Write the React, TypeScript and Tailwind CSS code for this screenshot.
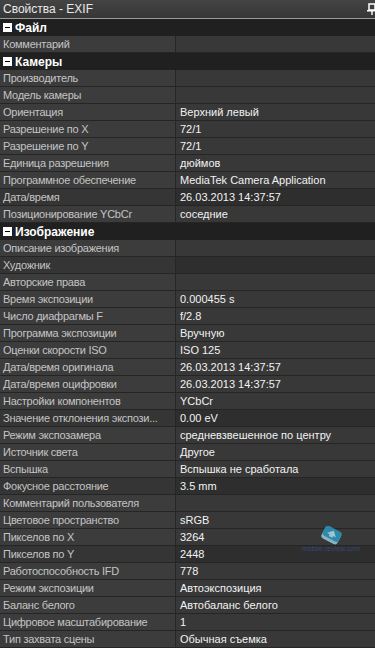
import React from "react";

type Item = { h: string } | { l: string; v?: string; dark?: boolean };

const items: Item[] = [
  { h: "Файл" },
  { l: "Комментарий" },
  { h: "Камеры" },
  { l: "Производитель" },
  { l: "Модель камеры" },
  { l: "Ориентация", v: "Верхний левый" },
  { l: "Разрешение по X", v: "72/1" },
  { l: "Разрешение по Y", v: "72/1" },
  { l: "Единица разрешения", v: "дюймов" },
  { l: "Программное обеспечение", v: "MediaTek Camera Application" },
  { l: "Дата/время", v: "26.03.2013 14:37:57", dark: true },
  { l: "Позиционирование YCbCr", v: "соседние" },
  { h: "Изображение" },
  { l: "Описание изображения" },
  { l: "Художник", dark: true },
  { l: "Авторские права" },
  { l: "Время экспозиции", v: "0.000455 s" },
  { l: "Число диафрагмы F", v: "f/2.8" },
  { l: "Программа экспозиции", v: "Вручную" },
  { l: "Оценки скорости ISO", v: "ISO 125" },
  { l: "Дата/время оригинала", v: "26.03.2013 14:37:57" },
  { l: "Дата/время оцифровки", v: "26.03.2013 14:37:57" },
  { l: "Настройки компонентов", v: "YCbCr" },
  { l: "Значение отклонения экспози...", v: "0.00 eV", dark: true },
  { l: "Режим экспозамера", v: "средневзвешенное по центру" },
  { l: "Источник света", v: "Другое" },
  { l: "Вспышка", v: "Вспышка не сработала" },
  { l: "Фокусное расстояние", v: "3.5 mm", dark: true },
  { l: "Комментарий пользователя" },
  { l: "Цветовое пространство", v: "sRGB" },
  { l: "Пикселов по X", v: "3264" },
  { l: "Пикселов по Y", v: "2448", dark: true },
  { l: "Работоспособность IFD", v: "778" },
  { l: "Режим экспозиции", v: "Автоэкспозиция" },
  { l: "Баланс белого", v: "Автобаланс белого" },
  { l: "Цифровое масштабирование", v: "1" },
  { l: "Тип захвата сцены", v: "Обычная съемка" },
];

function Minus() {
  return (
    <span className="w-[9px] h-[9px] bg-white flex items-center justify-center mr-[3px] shrink-0">
      <span className="w-[5px] h-[1px] bg-black" />
    </span>
  );
}

export default function App() {
  return (
    <div
      className="w-[375px] h-[648px] overflow-hidden bg-[#222] relative"
      style={{ fontFamily: '"Liberation Sans", Arial, sans-serif' }}
    >
      <div className="h-[18px] bg-gradient-to-b from-[#444] to-[#363636] flex items-center justify-between pl-[3px] border-b border-[#9a9a9a] box-content">
        <span className="text-[12px] text-[#e8e8e8] leading-none">Свойства - EXIF</span>
        <svg width="12" height="12" viewBox="0 0 12 12" className="mr-[-3px]">
          <rect x="3" y="1" width="6" height="6" fill="none" stroke="#fff" strokeWidth="1.5" />
          <rect x="1" y="7" width="10" height="1.5" fill="#fff" />
          <rect x="5.3" y="8" width="1.4" height="4" fill="#fff" />
        </svg>
      </div>
      {items.map((it, i) =>
        "h" in it ? (
          <div key={i} className="h-[17px] bg-[#202020] flex items-center pl-[3px]">
            <Minus />
            <span className="text-[12px] font-bold text-white leading-none">{it.h}</span>
          </div>
        ) : (
          <div key={i} className="h-[17px] flex border-b border-[#252525]">
            <div
              className={`w-[176px] shrink-0 border-r border-[#262626] pl-[3px] flex items-center text-[11px] tracking-[-0.25px] text-[#c4c4c4] leading-none whitespace-nowrap overflow-hidden ${
                it.dark ? "bg-[#353535]" : "bg-[#3c3c3c]"
              }`}
            >
              {it.l}
            </div>
            <div
              className={`flex-1 pl-[4px] flex items-center text-[11px] text-[#f2f2f2] leading-none whitespace-nowrap ${
                it.dark ? "bg-[#2e2e2e]" : "bg-[#383838]"
              }`}
            >
              {it.v ?? ""}
            </div>
          </div>
        )
      )}
      <div className="absolute left-[302px] top-[526px] flex flex-col items-center opacity-80">
        <svg width="28" height="20" viewBox="0 0 28 20">
          <g transform="rotate(28 14 10)">
            <rect x="5" y="3" width="18" height="13" rx="3" fill="#9fd3e6" />
            <rect x="5" y="2" width="18" height="11" rx="3" fill="#2a9ec8" />
            <path d="M14 4 L19 9 L16 9 L16 11 L12 11 L12 9 L9 9 Z" fill="#bfe6f3" />
          </g>
        </svg>
        <span className="text-[7px] text-[#3a4f8a] leading-none -mt-[1px]" style={{ fontFamily: '"Liberation Sans", sans-serif' }}>
          mobile-review.com
        </span>
      </div>
    </div>
  );
}
